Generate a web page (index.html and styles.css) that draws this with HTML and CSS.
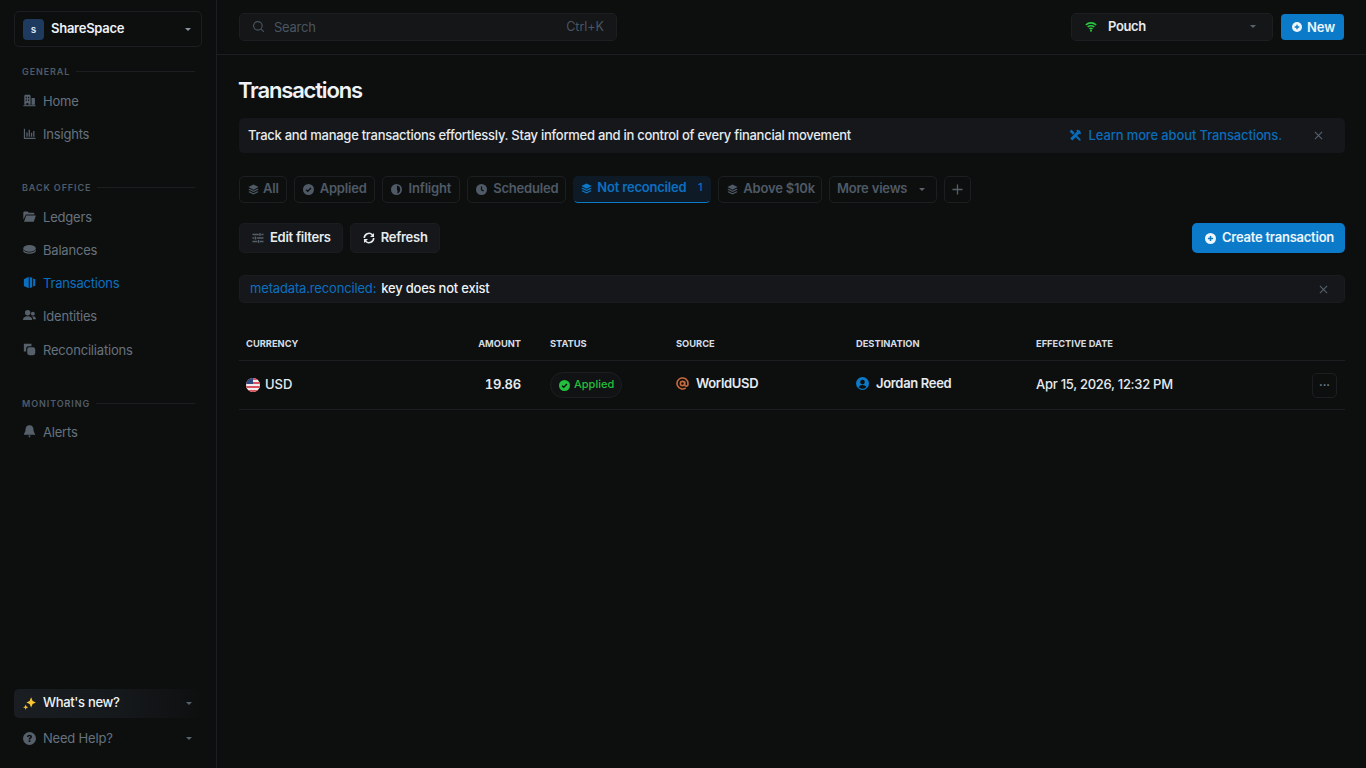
FILE: index.html
```html
<!DOCTYPE html>
<html lang="en">
<head>
<meta charset="utf-8">
<title>Transactions</title>
<link rel="stylesheet" href="styles.css">
</head>
<body>
<div class="app">
  <aside class="sidebar">
    <div class="workspace">
      <span class="ws-badge">S</span>
      <span class="ws-name">ShareSpace</span>
      <span class="caret caret-light"></span>
    </div>
    <div class="nav-head nav-head-first"><span>GENERAL</span><i></i></div>
    <a class="nav-item"><svg class="ni" viewBox="0 0 12 12"><path fill-rule="evenodd" d="M1.200 10V1.500L2 .8h4.300l.7.7V10H5V8.400H3.200V10zM2.500 2.600h1.100v1.300H2.500zM4.600 2.600h1.100v1.300H4.600zM2.500 5h1.100v1.300H2.500zM4.600 5h1.100v1.300H4.600z"/><path d="M7.900 3.600h2.500l.6.6V10H7.900z"/><path d="M.4 10.300h11.200v1H.4z"/></svg>Home</a>
    <a class="nav-item"><svg class="ni" viewBox="0 0 12 12"><path d="M.8 1.500h1.100V10h9.600v1.100H.8z"/><path d="M3.100 5h1.200v4.100H3.100zM5.200 2.600h1.200v6.500H5.200zM7.300 5.400h1.200v3.700H7.300zM9.400 3.800h1.200v5.300H9.400z"/></svg>Insights</a>

    <div class="nav-head"><span>BACK OFFICE</span><i></i></div>
    <a class="nav-item"><svg class="ni" viewBox="0 0 12 12"><path d="M.3 2.100 1 1.300h3.300l1 1.200h4.500l.7.700v.9H2.600L.3 9z"/><path d="M3 5h8.900L10 10.800H.9z"/></svg>Ledgers</a>
    <a class="nav-item"><svg class="ni" viewBox="0 0 12 12"><ellipse cx="6" cy="5" rx="5.800" ry="3.100"/><path d="M.2 6.100C1 7.800 3.400 8.800 6 8.800s5-1 5.800-2.700v1C11.800 8.700 9.200 9.900 6 9.900S.2 8.700.2 7.100z"/></svg>Balances</a>
    <a class="nav-item active"><svg class="ni" viewBox="0 0 12 12"><path d="M.8 3 5.300.8v10.400L.8 9.300z"/><path d="M6.300.9l2.200.8v8.600l-2.200.8z"/><path d="M9.400 2.200l1.900.8v6l-1.900.8z"/></svg>Transactions</a>
    <a class="nav-item"><svg class="ni" viewBox="0 0 12 12"><circle cx="4.300" cy="3.500" r="2.500"/><path d="M0 10.200C0 7.800 1.800 6.700 4.300 6.700s4.200 1.100 4.200 3.500z"/><circle cx="9.100" cy="4.300" r="1.800"/><path d="M8.500 6.700c1.900-.3 3.500.7 3.500 2.800H9.400c0-1.100-.3-2-.9-2.800z"/></svg>Identities</a>
    <a class="nav-item nav-last"><svg class="ni" viewBox="0 0 12 12"><path d="M.8.800h7v2.100H5.200a2.300 2.300 0 0 0-2.300 2.300v2.600H.8z"/><rect x="3.900" y="3.900" width="7.400" height="7.400" rx="2"/></svg>Reconciliations</a>

    <div class="nav-head nav-head-mon"><span>MONITORING</span><i></i></div>
    <a class="nav-item nav-alerts"><svg class="ni" viewBox="0 0 12 12"><path d="M6 .3c2.500 0 3.700 1.800 3.700 4.100 0 2.100.9 3 1.500 3.800v.9H.8v-.9c.6-.8 1.500-1.700 1.500-3.800C2.300 2.100 3.500.3 6 .3z"/><path d="M4.800 9.700h2.400L6 11.800z"/></svg>Alerts</a>

    <div class="side-foot">
      <div class="foot-new">
        <svg class="ni" viewBox="0 0 12 12"><path fill="#fbc531" d="M7.500.3 8.900 3.600l3 1.400-3 1.400-1.400 3.300-1.400-3.300-3-1.400 3-1.400zM2.500 7l.7 1.700 1.700.7-1.700.7-.7 1.700-.7-1.700-1.700-.7 1.700-.7z"/></svg>
        <span class="foot-label">What's new?</span>
        <span class="caret"></span>
      </div>
      <div class="foot-help">
        <svg class="ni" viewBox="0 0 12 12"><circle cx="6" cy="6" r="6"/><path fill="#0d0f0f" d="M6 2.500c1.400 0 2.300.8 2.300 1.900 0 1.400-1.500 1.500-1.500 2.600H5.200c0-1.800 1.500-1.800 1.500-2.600 0-.4-.3-.7-.7-.7-.5 0-.8.300-.8.800H3.700c0-1.200.9-2 2.300-2zM5.200 7.700h1.600v1.500H5.200z"/></svg>
        <span class="foot-label">Need Help?</span>
        <span class="caret"></span>
      </div>
    </div>
  </aside>

  <div class="main">
    <header class="topbar">
      <div class="search">
        <svg class="search-ic" viewBox="0 0 14 14"><circle cx="6.300" cy="6.300" r="4.600"/><path d="m9.800 9.800 3 3"/></svg>
        <span class="search-text">Search</span>
        <span class="kbd">Ctrl+K</span>
      </div>
      <div class="pouch">
        <svg class="wifi" viewBox="0 0 14 12"><path d="M.8 3.600a9 9 0 0 1 12.400 0M3 6a6 6 0 0 1 8 0M5.100 8.300a3 3 0 0 1 3.800 0" /><circle cx="7" cy="10.500" r="1.200"/></svg>
        <span class="pouch-name">Pouch</span>
        <span class="caret"></span>
      </div>
      <button class="btn-primary btn-new"><svg class="plus-ic" viewBox="0 0 12 12"><circle cx="6" cy="6" r="6" fill="currentColor"/><path d="M6 3.200v5.600M3.200 6h5.600" stroke="#0b7bc9" stroke-width="1.600"/></svg>New</button>
    </header>

    <main class="content">
      <h1 class="title">Transactions</h1>

      <div class="banner">
        <span class="banner-text">Track and manage transactions effortlessly. Stay informed and in control of every financial movement</span>
        <a class="banner-link"><svg class="link-ic" viewBox="0 0 12 12"><path d="M1.200 9.400 8 2.600l-.8-.8L8.600.6l1.200 1 .9-.3.800.8-.3.900 1 1.200-1.200 1.400-.8-.8-6.800 6.800z"/><path d="M.6 2.500 2.500.6 5.800 3.900 3.900 5.800zM6.300 7.700l1.400-1.400 3.800 3.800.1 1.500-1.500-.1z"/></svg>Learn more about Transactions.</a>
        <svg class="x-ic" viewBox="0 0 10 10"><path d="m1 1 8 8M9 1 1 9"/></svg>
      </div>

      <div class="tabs">
        <a class="tab tab-all"><svg class="tab-ic" viewBox="0 0 12 12"><use href="#stack"/></svg>All</a>
        <a class="tab"><svg class="tab-ic" viewBox="0 0 12 12"><circle cx="6" cy="6" r="6"/><path d="m3.300 6.200 1.900 1.800 3.500-3.700" fill="none" stroke="#0d0f0f" stroke-width="1.500"/></svg>Applied</a>
        <a class="tab tab-inflight"><svg class="tab-ic" viewBox="0 0 12 12"><circle cx="6" cy="6" r="6"/><path fill="#0d0f0f" d="M6.500 1.600a4.500 4.500 0 0 1 0 8.800c.9-1.300.9-3 0-4.100z"/></svg>Inflight</a>
        <a class="tab"><svg class="tab-ic" viewBox="0 0 12 12"><circle cx="6" cy="6" r="6"/><path d="M6 2.800v3.500l2.400 1.400" fill="none" stroke="#0d0f0f" stroke-width="1.400"/></svg>Scheduled</a>
        <a class="tab tab-active"><svg class="tab-ic" viewBox="0 0 12 12"><use href="#stack"/></svg><span class="tab-label">Not reconciled</span><span class="tab-count">1</span></a>
        <a class="tab tab-above"><svg class="tab-ic" viewBox="0 0 12 12"><use href="#stack"/></svg>Above $10k</a>
        <a class="tab tab-more">More views<span class="caret"></span></a>
        <a class="tab tab-plus"><svg class="add-ic" viewBox="0 0 12 12"><path d="M6 .5v11M.5 6h11"/></svg></a>
      </div>

      <div class="actions">
        <button class="btn"><svg class="btn-ic" viewBox="0 0 12 12"><path d="M.5 2.500h6.300M9.400 2.500h2.100M.5 6h1.600M4.700 6h6.800M.5 9.500h4.800M7.900 9.500h3.600"/><path d="M8 1v3M3.400 4.500v3M6.600 8v3"/></svg>Edit filters</button>
        <button class="btn"><svg class="btn-ic btn-ic-light" viewBox="0 0 12 12"><path d="M1.300 6a4.700 4.700 0 0 1 8-3.300l.9.900M10.700 6a4.700 4.700 0 0 1-8 3.300l-.9-.9"/><path class="tip" d="M11 .9v4H7zM1 11.100v-4h4z"/></svg>Refresh</button>
        <button class="btn-primary btn-create"><svg class="plus-ic" viewBox="0 0 12 12"><circle cx="6" cy="6" r="6" fill="currentColor"/><path d="M6 3.200v5.600M3.200 6h5.600" stroke="#0b7bc9" stroke-width="1.600"/></svg>Create transaction</button>
      </div>

      <div class="filter">
        <span class="filter-key">metadata.reconciled:</span>
        <span class="filter-val">key does not exist</span>
        <svg class="x-ic" viewBox="0 0 10 10"><path d="m1 1 8 8M9 1 1 9"/></svg>
      </div>

      <div class="table">
        <div class="row row-head">
          <div class="cell">CURRENCY</div>
          <div class="cell cell-right">AMOUNT</div>
          <div class="cell cell-status">STATUS</div>
          <div class="cell">SOURCE</div>
          <div class="cell">DESTINATION</div>
          <div class="cell">EFFECTIVE DATE</div>
          <div class="cell"></div>
        </div>
        <div class="row row-body">
          <div class="cell">
            <svg class="flag" viewBox="0 0 14 14">
              <defs><clipPath id="flagclip"><circle cx="7" cy="7" r="7"/></clipPath></defs>
              <g clip-path="url(#flagclip)">
                <rect width="14" height="14" fill="#f4ecec"/>
                <path d="M0 0h14v2H0zM0 4h14v2H0zM0 8h14v2H0zM0 12h14v2H0z" fill="#d8535f"/>
                <rect width="7" height="6" fill="#2b4a80"/>
              </g>
            </svg>
            USD
          </div>
          <div class="cell cell-right cell-num">19.86</div>
          <div class="cell cell-status">
            <span class="pill"><svg class="pill-ic" viewBox="0 0 12 12"><circle cx="6" cy="6" r="6"/><path d="m3.300 6.200 1.900 1.800 3.500-3.700" fill="none" stroke="#0d0f0f" stroke-width="1.500"/></svg><span class="pill-text">Applied</span></span>
          </div>
          <div class="cell cell-strong">
            <svg class="at-ic" viewBox="0 0 14 14"><circle cx="7" cy="7" r="2.300"/><path d="M9.300 4.700V8a1.800 1.800 0 0 0 3.600 0V7a5.900 5.900 0 1 0-2.400 4.700"/></svg>
            WorldUSD
          </div>
          <div class="cell cell-strong">
            <svg class="user-ic" viewBox="0 0 14 14"><circle cx="7" cy="7" r="7"/><circle cx="7" cy="5.500" r="2.500" fill="#0d0f0f"/><path d="M2.800 11c.8-1.500 2.300-2.400 4.200-2.400s3.400.9 4.200 2.400A5.500 5.500 0 0 1 7 12.600 5.500 5.500 0 0 1 2.800 11z" fill="#0d0f0f"/></svg>
            Jordan Reed
          </div>
          <div class="cell cell-date">Apr 15, 2026, 12:32 PM</div>
          <div class="cell cell-more"><span class="more-btn">···</span></div>
        </div>
      </div>
    </main>
  </div>
</div>
<svg class="defs" aria-hidden="true"><defs><g id="stack"><path d="M6 .6 11.600 3.400 6 6.200.4 3.400z"/><path d="M1.700 5.200 6 7.400l4.300-2.200 1.300.7L6 8.800.4 5.900z"/><path d="M1.700 7.900 6 10l4.300-2.100 1.300.7L6 11.500.4 8.600z"/></g></defs></svg>
</body>
</html>
```
FILE: styles.css
```css
* { box-sizing: border-box; }
html, body { margin: 0; height: 100%; }
body {
  background: #0d0f0f;
  font-family: Inter, "Liberation Sans", sans-serif;
  font-size: 13px;
  color: #e6ebf0;
  overflow: hidden;
}
.defs { position: absolute; width: 0; height: 0; }
.app { display: flex; height: 768px; }

.sidebar {
  width: 217px;
  flex: none;
  border-right: 1px solid #1c1f21;
  padding: 11px 14px 12px;
  display: flex;
  flex-direction: column;
}
.workspace {
  height: 36px;
  border: 1px solid #1c1f21;
  border-radius: 5px;
  display: flex;
  align-items: center;
  padding: 0 10px 0 8px;
}
.ws-badge {
  width: 21px; height: 21px;
  border-radius: 4px;
  background: #1f3a5f;
  color: #dbe6f2;
  font-size: 10px;
  font-weight: 600;
  display: flex; align-items: center; justify-content: center;
  margin-right: 7px;
  text-transform: lowercase;
}
.ws-name { font-weight: 600; color: #eef2f6; flex: 1; font-size: 13px; letter-spacing: -0.02em; margin-bottom: 2px; }
.caret {
  width: 0; height: 0;
  border-left: 3px solid transparent;
  border-right: 3px solid transparent;
  border-top: 3px solid #5a636d;
  flex: none;
}
.caret-light { border-top-color: #8a939d; }

.nav-head {
  display: flex;
  align-items: center;
  gap: 6px;
  padding: 0 7px 0 8px;
  margin-top: 31px;
  height: 12px;
  font-size: 9px;
  font-weight: 600;
  letter-spacing: 0.9px;
  color: #4f5b68;
}
.nav-head i { flex: 1; height: 1px; background: #1c1f21; }
.nav-head-first { margin-top: 18px; }
.nav-head-mon { margin-top: 31px; }
.nav-item {
  display: flex;
  align-items: center;
  gap: 7px;
  height: 33px;
  padding-left: 9px;
  color: #66727e;
  font-size: 13px;
  font-weight: 400;
  letter-spacing: -0.015em;
}
.nav-head + .nav-item { margin-top: 7px; }
.nav-head + .nav-alerts { margin-top: 6px; }
.nav-item.active { color: #0b6fc0; }
.nav-item.nav-last { margin-top: 1px; }
.ni { width: 13px; height: 13px; fill: #56606b; flex: none; }
.active .ni { fill: #0b6fc0; }

.side-foot { margin-top: auto; display: flex; flex-direction: column; gap: 2px; }
.foot-new, .foot-help {
  display: flex;
  align-items: center;
  gap: 7px;
  padding: 0 10px 0 9px;
}
.foot-new {
  height: 29px;
  border-radius: 5px;
  background: linear-gradient(90deg, #1a1d21 0%, #16191c 55%, #0d0f0f 100%);
}
.foot-help { height: 36px; }
.foot-label { flex: 1; }
.foot-new .foot-label { color: #eef2f6; font-weight: 500; letter-spacing: -0.025em; margin-bottom: 4px; }
.foot-help .foot-label { color: #66727e; letter-spacing: -0.015em; }

.main { flex: 1; min-width: 0; display: flex; flex-direction: column; }
.topbar {
  height: 55px;
  flex: none;
  border-bottom: 1px solid #1c1f21;
  display: flex;
  align-items: center;
  padding: 0 22px 1px 22px;
}
.search {
  width: 378px;
  height: 28px;
  background: #141618;
  border: 1px solid #1c1f21;
  border-radius: 5px;
  display: flex;
  align-items: center;
  padding: 0 12px;
  color: #4a5561;
}
.search-ic { width: 13px; height: 13px; fill: none; stroke: #4a5561; stroke-width: 1.200; margin-right: 9px; flex: none; }
.search-text { flex: 1; letter-spacing: -0.02em; }
.kbd { font-size: 12.500px; }
.pouch {
  margin-left: auto;
  width: 202px;
  height: 28px;
  background: #141618;
  border: 1px solid #1c1f21;
  border-radius: 5px;
  display: flex;
  align-items: center;
  padding: 0 16px 0 13px;
}
.wifi { width: 12px; height: 10px; fill: #28c840; stroke: #28c840; stroke-width: 2; margin-right: 11px; flex: none; }
.wifi path { fill: none; }
.wifi circle { stroke: none; }
.pouch-name { flex: 1; font-weight: 600; color: #e6ebf0; letter-spacing: -0.03em; margin-bottom: 2px; }
.btn-primary {
  border: 0;
  border-radius: 4px;
  background: #0b7bc9;
  color: #eef5fb;
  font: inherit;
  font-weight: 600;
  display: flex;
  align-items: center;
  padding: 0;
}
.btn-new {
  width: 63px;
  height: 26px;
  margin-left: 8px;
  padding-left: 11px;
  gap: 5px;
}
.plus-ic { width: 10px; height: 10px; flex: none; }

.content { padding: 0 21px 0 22px; }
.title {
  margin: 22px 0 0 -1px;
  height: 26px;
  font-size: 22px;
  line-height: 26px;
  font-weight: 600;
  letter-spacing: -0.053em;
  color: #eef3f8;
}
.banner {
  margin-top: 15px;
  height: 35px;
  background: #15171a;
  border-radius: 5px;
  display: flex;
  align-items: center;
  padding: 0 22px 0 9px;
}
.banner-text { flex: 1; font-weight: 500; color: #e6ebf0; letter-spacing: -0.021em; margin-bottom: 2px; }
.banner-link {
  display: flex; align-items: center; gap: 8px;
  color: #0a6cb8;
  font-weight: 500;
  margin-right: 32px;
  letter-spacing: -0.01em;
  margin-bottom: 2px;
}
.link-ic { width: 12px; height: 12px; fill: #0a6cb8; flex: none; }
.x-ic { width: 9px; height: 9px; stroke: #56606b; stroke-width: 1.300; fill: none; flex: none; }

.tabs { display: flex; gap: 7px; margin-top: 23px; height: 27px; }
.tab {
  height: 27px;
  border: 1px solid #1c1f21;
  border-radius: 5px;
  display: flex;
  align-items: center;
  gap: 6px;
  padding: 0 7px 4px 8px;
  color: #4f5a66;
  font-weight: 600;
  letter-spacing: -0.015em;
}
.tab-ic { width: 11px; height: 11px; fill: #4f5a66; flex: none; margin-top: 4px; }
.tab-all { gap: 4px; }
.tab-inflight { gap: 7px; padding-right: 8px; }
.tab-above { gap: 5px; padding-right: 6px; }
.tab-active {
  background: #0e1b27;
  border-color: #0e1b27;
  border-bottom: 1px solid #0b7bc9;
  color: #0b6fc0;
  width: 138px;
  padding-left: 7px;
  gap: 5px;
}
.tab-active .tab-ic { fill: #0b7bc9; margin-top: 1px; }
.tab-active .tab-label { flex: 1; margin-top: -1px; }
.tab-count { font-weight: 500; font-size: 11px; margin-top: -1px; padding-right: 1px; }
.tab-more { padding: 0 11px 4px 7px; gap: 12px; }
.tab-more .caret { margin-top: 4px; }
.tab-plus { width: 27px; padding: 0; justify-content: center; }
.add-ic { width: 11px; height: 11px; stroke: #56606b; stroke-width: 1.400; fill: none; }

.actions { display: flex; gap: 7px; margin-top: 20px; height: 30px; }
.btn {
  border: 1px solid #1a1c1f;
  border-radius: 5px;
  background: #15171a;
  color: #e6ebf0;
  font: inherit;
  font-weight: 600;
  letter-spacing: -0.02em;
  display: flex;
  align-items: center;
  gap: 6px;
  padding: 0 11px 2px 12px;
}
.btn-ic { width: 12px; height: 12px; stroke: #56606b; stroke-width: 1.400; fill: none; flex: none; margin-top: 2px; }
.btn-ic-light { stroke: #e6ebf0; stroke-width: 1.600; }
.tip { fill: #e6ebf0; stroke: none; }
.btn-create {
  margin-left: auto;
  width: 153px;
  height: 30px;
  border-radius: 5px;
  padding: 0 0 2px 13px;
  gap: 6px;
  letter-spacing: -0.018em;
}
.btn-create .plus-ic { width: 11px; height: 11px; margin-top: 2px; }

.filter {
  margin-top: 22px;
  height: 28px;
  background: #15171a;
  border: 1px solid #1a1c1f;
  border-radius: 5px;
  display: flex;
  align-items: center;
  padding: 0 16px 2px 10px;
  gap: 5px;
}
.filter .x-ic { margin-top: 2px; }
.filter-key { color: #0b6fc0; letter-spacing: -0.012em; }
.filter-val { flex: 1; font-weight: 500; color: #eef2f6; letter-spacing: -0.017em; }

.table { margin-top: 22px; }
.row {
  display: grid;
  grid-template-columns: 180px 109px 141px 180px 180px 1fr 40px;
  align-items: center;
  border-bottom: 1px solid #1c1f21;
}
.row-head {
  height: 36px;
  font-size: 9.300px;
  font-weight: 700;
  color: #d5dce4;
  padding-top: 1px;
}
.row-body { height: 49px; font-weight: 500; padding-bottom: 2px; }
.cell { padding: 0 7px; display: flex; align-items: center; gap: 5px; }
.cell-right { justify-content: flex-end; }
.cell-status { padding-left: 22px; }
.cell-num { font-weight: 600; font-variant-numeric: tabular-nums; letter-spacing: -0.015em; }
.cell-strong { font-weight: 600; margin-top: -2px; gap: 7px; letter-spacing: -0.025em; }
.cell-date { font-weight: 500; letter-spacing: -0.021em; }
.cell-more { justify-content: flex-end; padding: 0 8px 0 0; }
.flag { width: 14px; height: 14px; flex: none; margin-top: 2px; }
.pill {
  height: 26px;
  width: 72px;
  border: 1px solid #1c1f21;
  border-radius: 13px;
  background: #101213;
  display: flex;
  align-items: center;
  gap: 4px;
  padding-left: 8px;
  margin-top: 2px;
  color: #22c03c;
  font-size: 11px;
  font-weight: 500;
}
.pill-text { margin-bottom: 2px; }
.pill-ic { width: 11px; height: 11px; fill: #22c03c; flex: none; }
.at-ic { width: 13px; height: 13px; stroke: #c96a3e; stroke-width: 1.700; fill: none; flex: none; }
.user-ic { width: 13px; height: 13px; fill: #0b7bc9; flex: none; }
.more-btn {
  width: 25px; height: 25px;
  border: 1px solid #1c1f21;
  border-radius: 5px;
  margin-top: 2px;
  display: flex; align-items: center; justify-content: center;
  color: #7b8590;
  font-size: 11px;
  font-weight: 700;
}
```
